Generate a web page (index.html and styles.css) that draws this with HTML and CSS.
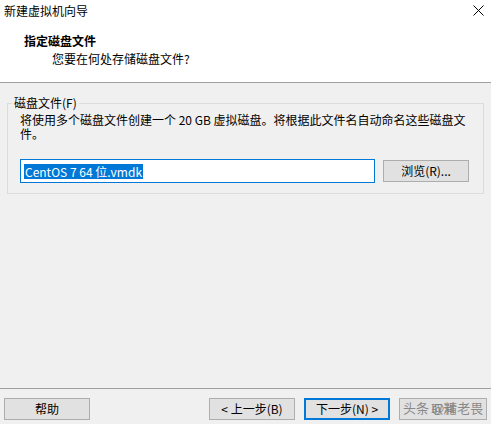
FILE: index.html
```html
<!DOCTYPE html>
<html lang="zh-CN">
<head>
    <meta charset="UTF-8">
    <title>新建虚拟机向导</title>
    <link rel="stylesheet" href="styles.css">
</head>
<body>
    <div class="wizard">
        <div class="top">
            <div class="titlebar">
                <span class="title">新建虚拟机向导</span>
                <svg class="close" width="11" height="11" viewBox="0 0 11 11">
                    <path d="M0.5 0.5 L10.5 10.5 M10.5 0.5 L0.5 10.5" stroke="#000" stroke-width="1" fill="none"/>
                </svg>
            </div>
            <div class="header">
                <div class="heading">指定磁盘文件</div>
                <div class="subheading">您要在何处存储磁盘文件?</div>
            </div>
        </div>
        <div class="main">
            <fieldset class="group">
                <legend>磁盘文件(F)</legend>
                <div class="group-body">
                    <p class="desc">将使用多个磁盘文件创建一个 20 GB 虚拟磁盘。将根据此文件名自动命名这些磁盘文件。</p>
                    <div class="file-row">
                        <div class="textbox"><span class="selected">CentOS 7 64 位.vmdk</span></div>
                        <div class="button">浏览(R)...</div>
                    </div>
                </div>
            </fieldset>
        </div>
        <div class="footer">
            <div class="button">帮助</div>
            <div class="nav">
                <div class="button">&lt; 上一步(B)</div>
                <div class="button default">下一步(N) &gt;</div>
                <div class="button cancel">取消<span class="watermark">头条 @精老畏</span></div>
            </div>
        </div>
    </div>
</body>
</html>
```

FILE: styles.css
```css
body {
    margin: 0;
    font-family: "Noto Sans CJK SC", "Noto Sans", sans-serif;
    font-size: 12px;
    color: #000;
}
.wizard {
    width: 491px;
    height: 424px;
    display: flex;
    flex-direction: column;
    background: #f0f0f0;
}
.top {
    background: #fff;
    border-bottom: 1px solid #a0a0a0;
    height: 82px;
}
.titlebar {
    height: 22px;
    display: flex;
    justify-content: space-between;
    align-items: center;
    padding: 0 7px 0 4px;
}
.title {
    line-height: 22px;
}
.close {
    margin-top: -1px;
}
.header {
    padding: 10px 0 0 24px;
}
.heading {
    font-weight: bold;
    line-height: 18px;
}
.subheading {
    line-height: 18px;
    padding-left: 28px;
}
.main {
    flex: 1;
    padding: 13px 7px 0;
}
.group {
    margin: 0;
    padding: 0 4px;
    border: 1px solid #dcdcdc;
    min-width: 0;
}
.group legend {
    padding: 0 2px;
    line-height: 14px;
}
.group-body {
    padding: 3px 2px 10px 8px;
}
.desc {
    margin: 0;
    line-height: 14px;
}
.file-row {
    display: flex;
    align-items: center;
    gap: 8px;
    margin-top: 18px;
}
.textbox {
    width: 355px;
    height: 24px;
    box-sizing: border-box;
    border: 1px solid #0078d7;
    background: #fff;
    padding: 0 0 0 3px;
    display: flex;
    align-items: center;
}
.selected {
    background: #0078d7;
    color: #fff;
    line-height: 15px;
    padding: 0 1px;
}
.button {
    width: 86px;
    height: 22px;
    box-sizing: border-box;
    border: 1px solid #adadad;
    background: #e1e1e1;
    text-align: center;
    line-height: 20px;
    position: relative;
}
.footer {
    border-top: 1px solid #a0a0a0;
    height: 36px;
    box-sizing: border-box;
    display: flex;
    justify-content: space-between;
    padding: 9px 4px 0 4px;
}
.nav {
    display: flex;
    gap: 9px;
}
.button.default {
    border: 2px solid #0078d7;
    line-height: 18px;
}
.button.cancel {
    width: 88px;
    color: #888;
}
.watermark {
    position: absolute;
    left: 3px;
    top: 0;
    line-height: 18px;
    font-size: 13px;
    color: rgba(120, 120, 120, 0.85);
    white-space: nowrap;
}
```
